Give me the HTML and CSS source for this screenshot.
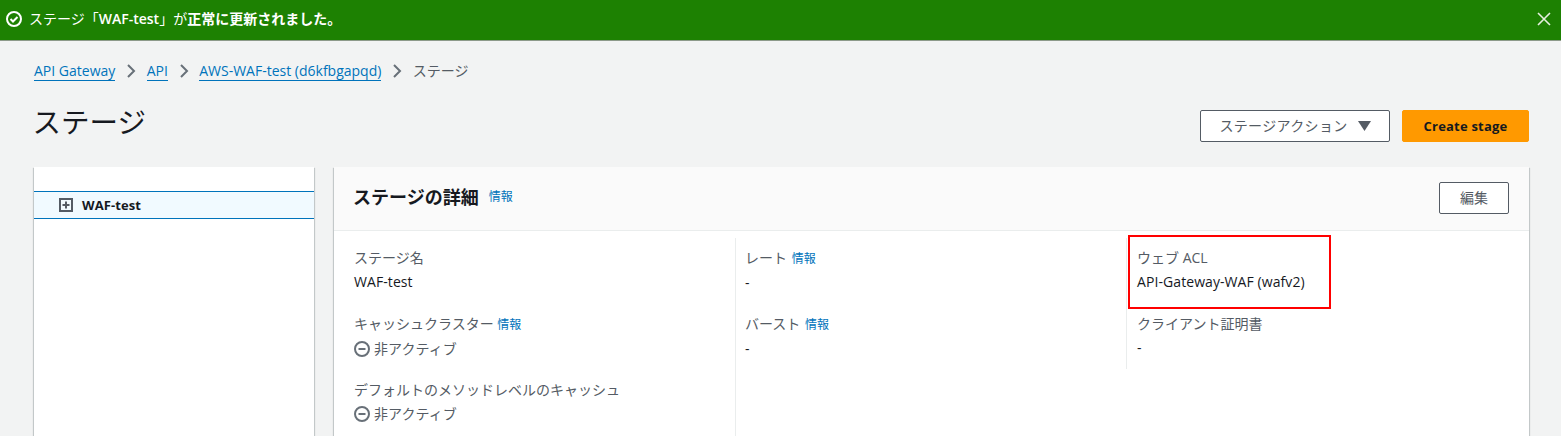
FILE: index.html
```html
<!DOCTYPE html>
<html lang="ja">
<head>
<meta charset="utf-8">
<title>ステージ</title>
<link rel="stylesheet" href="styles.css">
</head>
<body>
<div class="flash">
  <div class="flash-msg">
    <svg class="flash-icon" viewBox="0 0 16 16" width="16" height="16" fill="none" stroke="#fff" stroke-width="2"><circle cx="8" cy="8" r="7"/><path d="M4.5 8l2.5 2.5 4.5-4.5"/></svg>
    <span>ステージ「<b>WAF-test</b>」が<b>正常に更新されました。</b></span>
  </div>
  <svg class="flash-close" viewBox="0 0 16 16" width="16" height="16" fill="none" stroke="#e6efe0" stroke-width="1.6"><path d="M2 2l12 12M14 2L2 14"/></svg>
</div>
<main class="page">
  <nav class="crumbs">
    <a href="#">API Gateway</a>
    <svg class="chev" viewBox="0 0 16 16" width="16" height="16" fill="none" stroke="#687078" stroke-width="2"><path d="M5 2l6 6-6 6"/></svg>
    <a href="#">API</a>
    <svg class="chev" viewBox="0 0 16 16" width="16" height="16" fill="none" stroke="#687078" stroke-width="2"><path d="M5 2l6 6-6 6"/></svg>
    <a href="#">AWS-WAF-test (d6kfbgapqd)</a>
    <svg class="chev" viewBox="0 0 16 16" width="16" height="16" fill="none" stroke="#687078" stroke-width="2"><path d="M5 2l6 6-6 6"/></svg>
    <span class="crumb-current">ステージ</span>
  </nav>
  <header class="head">
    <h1>ステージ</h1>
    <div class="actions">
      <button class="btn btn-action"><span class="btn-label">ステージアクション</span><svg class="caret" viewBox="0 0 13 10" width="13" height="10"><path d="M0 0h13L6.5 10z" fill="#545b64"/></svg></button>
      <button class="btn btn-primary">Create stage</button>
    </div>
  </header>
  <div class="layout">
    <aside class="tree">
      <div class="tree-row">
        <svg class="tree-icon" viewBox="0 0 14 14" width="14" height="14" fill="none" stroke="#545b64" stroke-width="2"><rect x="1" y="1" width="12" height="12"/><path d="M3.5 7h7M7 3.5v7"/></svg>
        <span>WAF-test</span>
      </div>
    </aside>
    <section class="panel">
      <div class="panel-head">
        <div class="panel-title"><h2>ステージの詳細</h2><a class="info" href="#">情報</a></div>
        <button class="btn btn-edit">編集</button>
      </div>
      <div class="panel-body">
        <div class="col col-first">
          <div class="item">
            <div class="label">ステージ名</div>
            <div class="value">WAF-test</div>
          </div>
          <div class="item">
            <div class="label">キャッシュクラスター <a class="info" href="#">情報</a></div>
            <div class="value muted"><svg class="status" viewBox="0 0 16 16" width="16" height="16" fill="none" stroke="#687078" stroke-width="2"><circle cx="8" cy="8" r="7"/><path d="M4.5 8h7"/></svg>非アクティブ</div>
          </div>
          <div class="item">
            <div class="label">デフォルトのメソッドレベルのキャッシュ</div>
            <div class="value muted"><svg class="status" viewBox="0 0 16 16" width="16" height="16" fill="none" stroke="#687078" stroke-width="2"><circle cx="8" cy="8" r="7"/><path d="M4.5 8h7"/></svg>非アクティブ</div>
          </div>
        </div>
        <div class="col col-mid">
          <div class="item">
            <div class="label">レート <a class="info" href="#">情報</a></div>
            <div class="value">-</div>
          </div>
          <div class="item">
            <div class="label">バースト <a class="info" href="#">情報</a></div>
            <div class="value">-</div>
          </div>
        </div>
        <div class="col col-last">
          <div class="highlight"></div>
          <div class="item">
            <div class="label">ウェブ ACL</div>
            <div class="value">API-Gateway-WAF (wafv2)</div>
          </div>
          <div class="item">
            <div class="label">クライアント証明書</div>
            <div class="value">-</div>
          </div>
        </div>
      </div>
    </section>
  </div>
</main>
</body>
</html>
```
FILE: styles.css
```css
* { box-sizing: border-box; }
html, body { margin: 0; height: 436px; overflow: hidden; }
body {
  background: #f2f3f3;
  color: #16191f;
  font-family: "Open Sans", "Noto Sans CJK JP", sans-serif;
  font-size: 14px;
  line-height: 22px;
}
a { color: #0073bb; text-decoration: none; }

.flash {
  height: 41px;
  background: #1d8102;
  border-bottom: 1px solid #8d9a8a;
  color: #fff;
  display: flex;
  align-items: center;
  justify-content: space-between;
  padding: 0 9px 2px 6px;
}
.flash b { font-weight: 600; }
.flash-msg { display: flex; align-items: center; gap: 7px; }
.flash-close { display: block; }

.page { padding: 0 32px 0 34px; }

.crumbs {
  display: flex;
  align-items: center;
  height: 22px;
  margin-top: 19px;
}
.crumbs a { color: #0073bb; border-bottom: 1px solid #0073bb; line-height: 19px; }
.chev { margin: 0 7.7px; flex: none; }
.crumb-current { color: #545b64; }

.head {
  display: flex;
  justify-content: space-between;
  align-items: flex-start;
  margin-top: 28px;
  height: 57px;
}
h1 {
  margin: -10px 0 0 -1.5px;
  font-size: 28.5px;
  line-height: 44px;
  font-weight: 400;
}
.actions { display: flex; gap: 12px; }
.btn {
  font: inherit;
  height: 32px;
  border-radius: 2px;
  display: inline-flex;
  align-items: center;
  justify-content: center;
  padding: 0;
}
.btn-action {
  width: 190px;
  gap: 10px;
  background: #fff;
  border: 1px solid #545b64;
  color: #545b64;
}
.btn-label { letter-spacing: .35px; }
.caret { display: block; }
.btn-primary {
  width: 127px;
  background: #ff9900;
  border: 1px solid #ff9900;
  color: #16191f;
  font-weight: 700;
  font-size: 13px;
  letter-spacing: .2px;
}
.btn-edit {
  width: 70px;
  background: #fff;
  border: 1px solid #545b64;
  color: #545b64;
  font-weight: 400;
}

.layout { display: flex; gap: 20px; }
.tree {
  width: 280px;
  height: 280px;
  flex: none;
  background: #fff;
  box-shadow: 0 1px 1px 0 rgba(0, 28, 36, .3), 1px 1px 1px 0 rgba(0, 28, 36, .15), -1px 1px 1px 0 rgba(0, 28, 36, .15);
  padding-top: 24px;
}
.tree-row {
  height: 28px;
  background: #f1faff;
  border-top: 1px solid #0073bb;
  border-bottom: 1px solid #0073bb;
  display: flex;
  align-items: center;
  gap: 9px;
  padding-left: 25px;
  font-weight: 700;
  font-size: 13px;
  letter-spacing: .1px;
}
.tree-icon { display: block; }

.panel {
  flex: 1;
  height: 280px;
  background: #fff;
  box-shadow: 0 1px 1px 0 rgba(0, 28, 36, .3), 1px 1px 1px 0 rgba(0, 28, 36, .15), -1px 1px 1px 0 rgba(0, 28, 36, .15);
}
.panel-head {
  height: 64px;
  background: #fafafa;
  border-bottom: 1px solid #eaeded;
  display: flex;
  justify-content: space-between;
  align-items: center;
  padding: 0 20px 2px 19px;
}
.panel-title { display: flex; align-items: center; gap: 10px; padding-bottom: 2px; }
h2 { margin: 0; font-size: 18px; line-height: 26px; font-weight: 700; }
.info { font-size: 12px; }

.panel-body {
  display: grid;
  grid-template-columns: 381px 391px 1fr;
  padding: 7px 20px 0;
}
.col { position: relative; }
.col-mid { padding-left: 9px; border-left: 1px solid #eaeded; }
.col-mid .info { margin-left: 1px; }
.col-last { padding-left: 10px; border-left: 1px solid #eaeded; }
.col-first, .col-mid { min-height: 198px; }
.col-last { height: 131px; }
.item { height: 66px; padding-top: 8px; }
.label { color: #545b64; line-height: 24px; }
.value { line-height: 24px; letter-spacing: .08px; }
.muted { color: #545b64; display: flex; align-items: center; gap: 4px; }
.status { display: block; flex: none; }
.highlight {
  position: absolute;
  left: 1px;
  top: -3px;
  width: 203px;
  height: 74px;
  border: 2px solid #f00;
}
```
